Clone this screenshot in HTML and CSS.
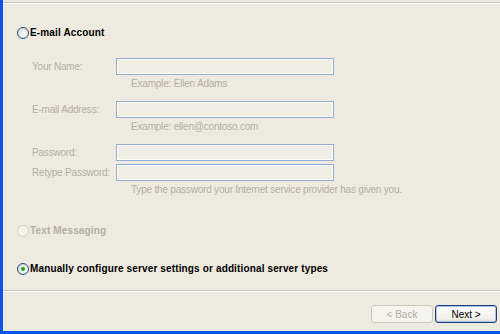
FILE: index.html
```html
<!DOCTYPE html>
<html>
<head>
<meta charset="utf-8">
<link rel="stylesheet" href="styles.css">
</head>
<body>
<div class="window">
  <div class="top-rule"></div>
  <div class="content">
    <div class="radio-row first">
      <svg class="radio" width="12" height="12" viewBox="0 0 12 12">
        <defs><radialGradient id="rg1" cx="0.65" cy="0.65" r="0.7"><stop offset="0" stop-color="#ffffff"/><stop offset="1" stop-color="#dcdad0"/></radialGradient></defs>
        <circle cx="6" cy="6" r="5.5" fill="url(#rg1)" stroke="#1c5180" stroke-width="1"/>
      </svg>
      <span class="radio-label">E-mail Account</span>
    </div>

    <div class="form">
      <div class="field">
        <span class="label">Your Name:</span>
        <div class="input"></div>
      </div>
      <div class="hint">Example: Ellen Adams</div>

      <div class="field spaced">
        <span class="label">E-mail Address:</span>
        <div class="input"></div>
      </div>
      <div class="hint">Example: ellen@contoso.com</div>

      <div class="field spaced">
        <span class="label">Password:</span>
        <div class="input"></div>
      </div>
      <div class="field tight">
        <span class="label">Retype Password:</span>
        <div class="input"></div>
      </div>
      <div class="hint">Type the password your Internet service provider has given you.</div>
    </div>

    <div class="radio-row sms">
      <svg class="radio" width="12" height="12" viewBox="0 0 12 12">
        <circle cx="6" cy="6" r="5.5" fill="#f3f1ea" stroke="#d2d0c4" stroke-width="1"/>
      </svg>
      <span class="radio-label disabled">Text Messaging</span>
    </div>

    <div class="radio-row manual">
      <svg class="radio" width="12" height="12" viewBox="0 0 12 12">
        <defs><radialGradient id="rg2" cx="0.65" cy="0.65" r="0.7"><stop offset="0" stop-color="#ffffff"/><stop offset="1" stop-color="#dcdad0"/></radialGradient></defs>
        <circle cx="6" cy="6" r="5.5" fill="url(#rg2)" stroke="#1c5180" stroke-width="1"/>
        <circle cx="6" cy="6" r="2" fill="#21a121"/>
      </svg>
      <span class="radio-label">Manually configure server settings or additional server types</span>
    </div>
  </div>

  <div class="bottom-rule"></div>
  <div class="buttons">
    <div class="btn disabled">&lt; Back</div>
    <div class="btn default">Next &gt;</div>
  </div>
</div>
</body>
</html>
```

FILE: styles.css
```css
* { box-sizing: border-box; }
html, body { margin: 0; padding: 0; }
body {
  width: 500px;
  height: 334px;
  overflow: hidden;
  font-family: "Liberation Sans", Arial, sans-serif;
  font-size: 10px;
  background: #ece9df;
}
.window {
  width: 500px;
  height: 334px;
  background: #eeeae0;
  border-left: 3px solid #0a55e6;
  border-bottom: 3px solid #0a55e6;
  display: flex;
  flex-direction: column;
}
.top-rule {
  margin-top: 2px;
  border-top: 1px solid #cac6b8;
  border-bottom: 1px solid #ffffff;
  height: 2px;
}
.content {
  padding-left: 14px;
}
.radio-row {
  display: flex;
  align-items: center;
  height: 13px;
}
.radio { flex: none; display: block; }
.radio-label {
  margin-left: 1px;
  font-weight: bold;
  font-size: 10px;
  letter-spacing: 0.14px;
  color: #000;
  white-space: nowrap;
}
.radio-label.disabled { color: #b3afa3; }
.radio-row.first { margin-top: 22px; }
.form {
  margin-left: 15px;
  margin-top: 19px;
  color: #b3afa3;
  letter-spacing: -0.2px;
}
.field {
  display: flex;
  align-items: center;
  height: 17px;
}
.field.spaced { margin-top: 11px; }
.field.tight { margin-top: 3px; }
.label {
  width: 84px;
  flex: none;
}
.input {
  width: 218px;
  height: 17px;
  border: 1px solid #93aed5;
  box-shadow: inset 0 0 0 1px #ffffff;
  background: #f1eee6;
}
.hint {
  margin-top: 2px;
  height: 13px;
  line-height: 13px;
  padding-left: 99px;
  white-space: nowrap;
}
.radio-row.sms { margin-top: 28px; }
.radio-row.manual { margin-top: 25px; }
.bottom-rule {
  margin-top: 15px;
  border-top: 1px solid #cac6b8;
  border-bottom: 1px solid #ffffff;
  height: 2px;
}
.buttons {
  display: flex;
  justify-content: flex-end;
  gap: 2px;
  padding-right: 3px;
  margin-top: 13px;
}
.btn {
  width: 62px;
  height: 18px;
  display: flex;
  align-items: center;
  justify-content: center;
  font-size: 10px;
  border-radius: 3px;
}
.btn.disabled {
  border: 1px solid #cbc8bb;
  color: #b0ac9f;
  background: #f5f4ef;
}
.btn.default {
  border: 1px solid #1d3f75;
  color: #000;
  background: linear-gradient(#ffffff, #f0efe8 80%, #dcd9cc);
  box-shadow: inset 0 0 0 1px #a9c2ee;
}
```
